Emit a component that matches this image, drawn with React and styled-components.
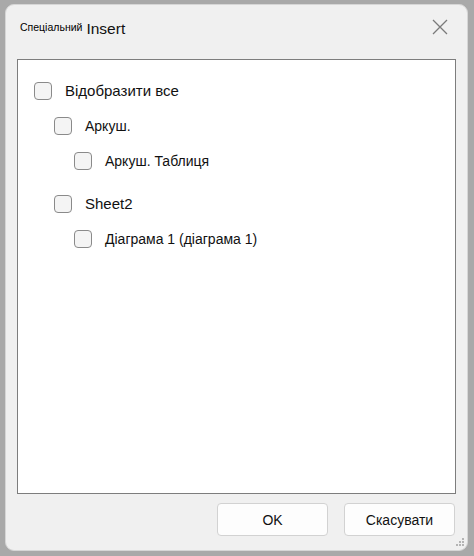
import React from "react";
import styled, { createGlobalStyle } from "styled-components";

const Global = createGlobalStyle`
  html, body { margin: 0; padding: 0; background: #a9a9a9; }
  body { width: 474px; height: 556px; overflow: hidden; font-family: "Liberation Sans", Arial, sans-serif; }
`;

const Frame = styled.div`
  width: 474px;
  height: 556px;
  box-sizing: border-box;
  padding: 4px 6px 5px 5px;
  background: #a9a9a9;
`;

const Window = styled.div`
  position: relative;
  height: 100%;
  box-sizing: border-box;
  background: #f0f0f0;
  border: 1px solid #d6d6d6;
  border-radius: 9px;
  display: flex;
  flex-direction: column;
  padding: 0 11px 0 11px;
`;

const TitleBar = styled.div`
  height: 46px;
  margin-bottom: 8px;
  display: flex;
  align-items: center;
  padding-left: 3px;
`;

const TitleSmall = styled.span`
  font-size: 10.5px;
  color: #000;
  margin-top: -3px;
`;

const TitleBig = styled.span`
  font-size: 15.5px;
  color: #111;
  margin-left: 4px;
  margin-top: 1px;
`;

const Close = styled.div`
  margin-left: auto;
  margin-right: 8px;
  margin-top: -3px;
  width: 16px;
  height: 16px;
  display: flex;
`;

const ListBox = styled.div`
  flex: 1;
  background: #fff;
  border: 1px solid #7d7d7d;
  padding: 13px 0 0 16px;
  display: flex;
  flex-direction: column;
`;

const Row = styled.div`
  display: flex;
  align-items: center;
  padding-left: ${(p) => p.$level * 20}px;
  height: 35px;
  margin-top: ${(p) => (p.$gap ? 8 : 0)}px;
  flex: none;
`;

const Box = styled.div`
  width: 16px;
  height: 16px;
  border: 1px solid #8a8a8a;
  border-radius: 4px;
  background: #f4f4f4;
  flex: none;
`;

const Label = styled.span`
  margin-left: 13px;
  font-size: ${(p) => p.$size}px;
  color: #111;
  white-space: nowrap;
`;

const Footer = styled.div`
  height: 56px;
  display: flex;
  justify-content: flex-end;
  align-items: center;
  gap: 16px;
  padding-bottom: 5px;
  margin-right: 1px;
  box-sizing: border-box;
`;

const Button = styled.button`
  width: 111px;
  height: 33px;
  box-sizing: border-box;
  border: 1px solid #d2d2d2;
  border-radius: 4px;
  background: #fdfdfd;
  font-family: "Liberation Sans", Arial, sans-serif;
  font-size: 14px;
  color: #111;
  padding: 0;
`;

const Grip = styled.svg`
  position: absolute;
  right: 2px;
  bottom: 3px;
`;

const items = [
  { level: 0, text: "Відобразити все", size: 15 },
  { level: 1, text: "Аркуш.", size: 14 },
  { level: 2, text: "Аркуш. Таблиця", size: 14 },
  { level: 1, text: "Sheet2", size: 15, gap: true },
  { level: 2, text: "Діаграма 1 (діаграма 1)", size: 14 },
];

export default function App() {
  return (
    <>
      <Global />
      <Frame>
        <Window>
          <TitleBar>
            <TitleSmall>Спеціальний</TitleSmall>
            <TitleBig>Insert</TitleBig>
            <Close>
              <svg width="16" height="16" viewBox="0 0 16 16">
                <path d="M1 1 L15 15 M15 1 L1 15" stroke="#7a7a7a" strokeWidth="1.3" fill="none" />
              </svg>
            </Close>
          </TitleBar>
          <ListBox>
            {items.map((it, i) => (
              <Row key={i} $level={it.level} $gap={it.gap}>
                <Box />
                <Label $size={it.size}>{it.text}</Label>
              </Row>
            ))}
          </ListBox>
          <Footer>
            <Button>OK</Button>
            <Button>Скасувати</Button>
          </Footer>
          <Grip width="10" height="10" viewBox="0 0 10 10">
            <g fill="#b4b4b4">
              <rect x="7" y="1" width="2" height="2" />
              <rect x="4" y="4" width="2" height="2" />
              <rect x="7" y="4" width="2" height="2" />
              <rect x="1" y="7" width="2" height="2" />
              <rect x="4" y="7" width="2" height="2" />
              <rect x="7" y="7" width="2" height="2" />
            </g>
          </Grip>
        </Window>
      </Frame>
    </>
  );
}
